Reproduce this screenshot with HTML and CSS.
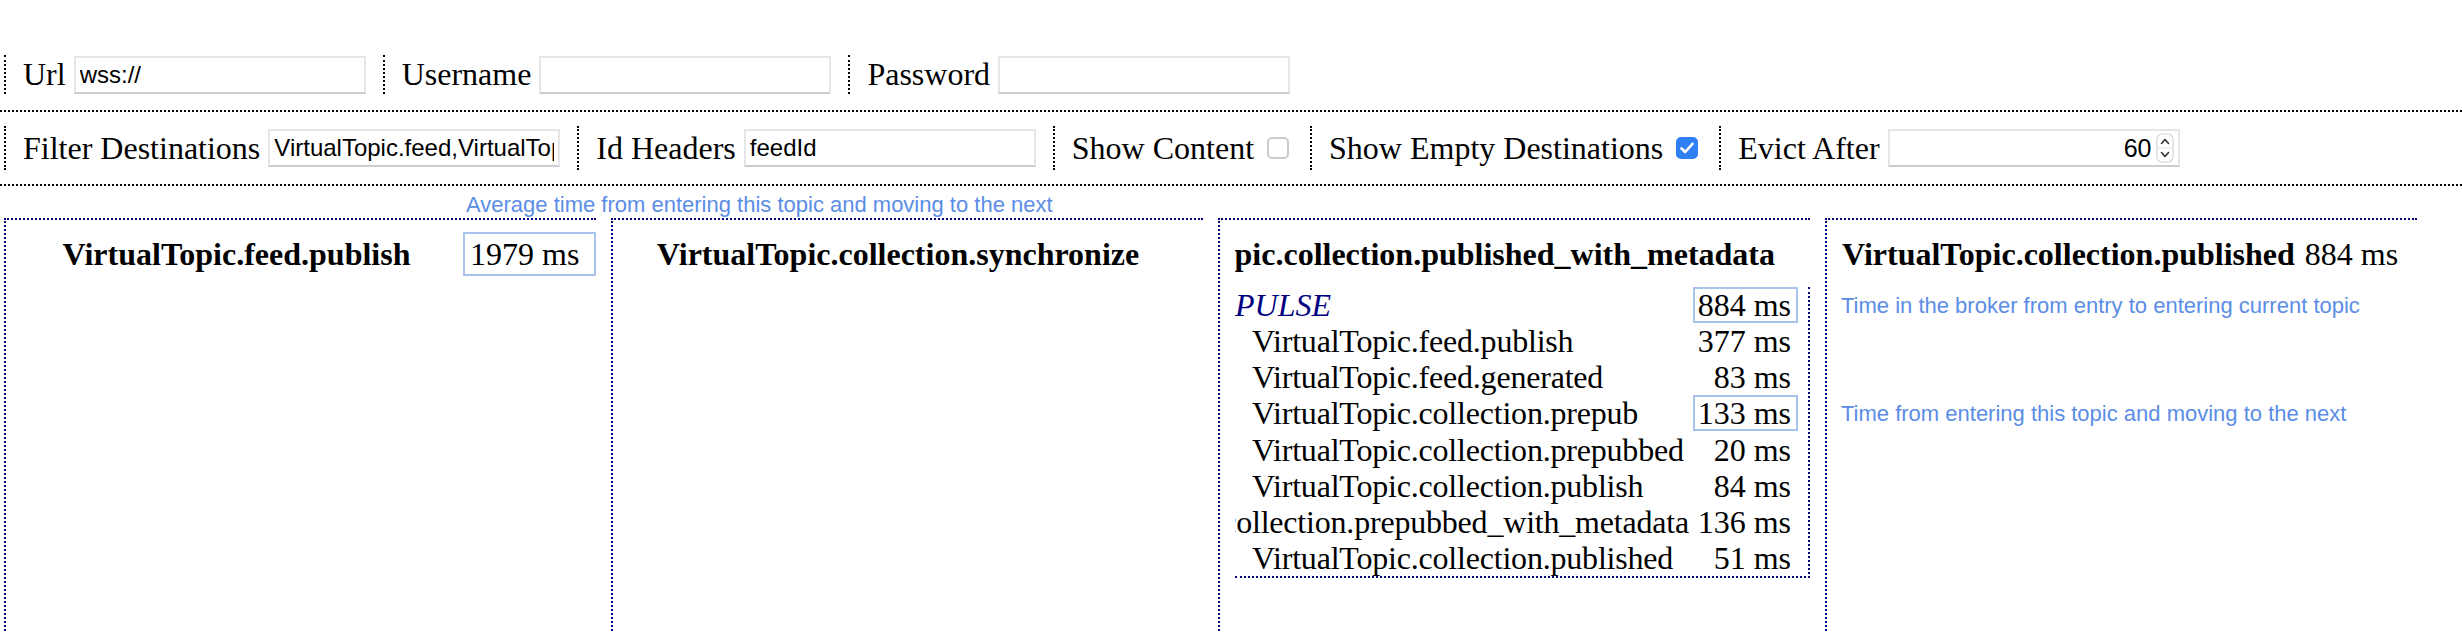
FILE: index.html
```html
<!DOCTYPE html>
<html>
<head>
<meta charset="utf-8">
<title>Broker destinations</title>
<link rel="stylesheet" href="styles.css">
</head>
<body>
<div class="bar bar-conn">
  <label class="field"><span class="lbl">Url</span><input class="txt" type="text" value="wss://"></label>
  <label class="field"><span class="lbl">Username</span><input class="txt" type="text" value=""></label>
  <label class="field"><span class="lbl">Password</span><input class="txt" type="password" value=""></label>
</div>
<div class="bar bar-opts">
  <label class="field"><span class="lbl">Filter Destinations</span><input class="txt" type="text" value="VirtualTopic.feed,VirtualTopic.collection"></label>
  <label class="field"><span class="lbl">Id Headers</span><input class="txt" type="text" value="feedId"></label>
  <label class="field"><span class="lbl">Show Content</span><span class="check"></span></label>
  <label class="field"><span class="lbl">Show Empty Destinations</span><span class="check on"><svg width="16" height="14" viewBox="0 0 16 14"><path d="M2.5 7.5 L6.2 11 L13.5 2.8" fill="none" stroke="#fff" stroke-width="2.6" stroke-linecap="round" stroke-linejoin="round"/></svg></span></label>
  <label class="field"><span class="lbl">Evict After</span><span class="num"><input class="num-in" type="text" value="60"><span class="spin"><svg width="18" height="30" viewBox="0 0 18 30"><rect x="1" y="1" width="16" height="28" rx="5" fill="#fff" stroke="#d6d6d6" stroke-width="1.2"/><line x1="2" y1="15" x2="16" y2="15" stroke="#e2e2e2" stroke-width="1"/><path d="M5.5 10.5 L9 6.5 L12.5 10.5" fill="none" stroke="#333" stroke-width="1.6" stroke-linecap="round" stroke-linejoin="round"/><path d="M5.5 19.5 L9 23.5 L12.5 19.5" fill="none" stroke="#333" stroke-width="1.6" stroke-linecap="round" stroke-linejoin="round"/></svg></span></span></label>
</div>
<div class="board">
  <section class="col">
    <div class="col-head">
      <h3 class="topic topic-lead">VirtualTopic.feed.publish</h3>
      <span class="lead-box">1979 ms<span class="tip tip-above">Average time from entering this topic and moving to the next</span></span>
    </div>
  </section>
  <section class="col">
    <div class="col-head">
      <h3 class="topic">VirtualTopic.collection.synchronize</h3>
    </div>
  </section>
  <section class="col">
    <div class="col-head">
      <h3 class="topic">VirtualTopic.collection.published_with_metadata</h3>
    </div>
    <div class="trail">
      <div class="row pulse"><span class="name">PULSE</span><span class="val boxed">884 ms<span class="tip tip-right">Time in the broker from entry to entering current topic</span></span></div>
      <div class="row"><span class="name">VirtualTopic.feed.publish</span><span class="val">377 ms</span></div>
      <div class="row"><span class="name">VirtualTopic.feed.generated</span><span class="val">83 ms</span></div>
      <div class="row"><span class="name">VirtualTopic.collection.prepub</span><span class="val boxed">133 ms<span class="tip tip-right">Time from entering this topic and moving to the next</span></span></div>
      <div class="row"><span class="name">VirtualTopic.collection.prepubbed</span><span class="val">20 ms</span></div>
      <div class="row"><span class="name">VirtualTopic.collection.publish</span><span class="val">84 ms</span></div>
      <div class="row"><span class="name">VirtualTopic.collection.prepubbed_with_metadata</span><span class="val">136 ms</span></div>
      <div class="row"><span class="name">VirtualTopic.collection.published</span><span class="val">51 ms</span></div>
    </div>
  </section>
  <section class="col">
    <div class="col-head col-head-left">
      <h3 class="topic topic-inline">VirtualTopic.collection.published</h3>
      <span class="head-ms">884 ms</span>
    </div>
  </section>
</div>
</body>
</html>
```

FILE: styles.css
```css
html, body {
  margin: 0;
  padding: 0;
  background: #fff;
}
body {
  width: 2462px;
  height: 632px;
  overflow: hidden;
  font-family: "Liberation Serif", "Times New Roman", serif;
  font-size: 32px;
  color: #000;
}

/* top bars */
.bar {
  display: flex;
  align-items: center;
  padding-left: 4px;
  border-bottom: 2px dotted #000;
}
.bar-conn {
  padding-top: 55px;
  padding-bottom: 16px;
}
.bar-opts {
  padding-top: 14px;
  padding-bottom: 14px;
}
.field {
  display: flex;
  align-items: center;
  gap: 8px;
  height: 39px;
  padding: 0 17px;
  border-left: 2px dotted #000;
}
.bar-opts .field {
  height: 44px;
}
.lbl {
  white-space: nowrap;
}
.txt {
  width: 292px;
  height: 38px;
  box-sizing: border-box;
  margin: 0;
  padding: 0 4px;
  border: 2px solid #e6e6e6;
  border-bottom-color: #cdcdcd;
  border-radius: 0;
  outline: none;
  background: #fff;
  color: #000;
  font-family: "Liberation Sans", Arial, sans-serif;
  font-size: 24px;
}
.check {
  width: 22px;
  height: 22px;
  box-sizing: border-box;
  margin: 0 4px 0 5px;
  border: 2px solid #cbcbcb;
  border-radius: 5px;
  background: #fff;
}
.check.on {
  display: flex;
  align-items: center;
  justify-content: center;
  background: #2f7ff5;
  border-color: #2f7ff5;
}
.num {
  display: flex;
  align-items: center;
  width: 292px;
  height: 38px;
  box-sizing: border-box;
  padding: 0 4px 0 6px;
  border: 2px solid #e6e6e6;
  border-bottom-color: #cdcdcd;
  background: #fff;
}
.num-in {
  flex: 1;
  min-width: 0;
  margin: 0;
  padding: 0 4px 0 0;
  border: 0;
  outline: none;
  background: transparent;
  text-align: right;
  color: #000;
  font-family: "Liberation Sans", Arial, sans-serif;
  font-size: 25px;
}
.spin {
  display: flex;
}

/* destination board */
.board {
  display: flex;
  gap: 15px;
  padding-left: 4px;
  margin-top: 32px;
}
.col {
  flex: none;
  width: 592px;
  min-height: 440px;
  box-sizing: border-box;
  padding-left: 15px;
  border-top: 2px dotted #000080;
  border-left: 2px dotted #000080;
}
.col-head {
  display: flex;
  align-items: center;
  height: 44px;
  margin-top: 12px;
}
.topic {
  flex: 1;
  min-width: 0;
  margin: 0 35px 0 0;
  font-size: 32px;
  font-weight: bold;
  line-height: 37px;
  white-space: nowrap;
  overflow: hidden;
  direction: rtl;
  text-align: center;
}
.topic-lead {
  margin-right: 11px;
}
.col-head-left .topic-inline {
  flex: none;
  margin-right: 0;
  direction: ltr;
  text-align: left;
}
.head-ms {
  margin-left: 10px;
  white-space: nowrap;
}
.lead-box {
  position: relative;
  flex: none;
  width: 133px;
  height: 44px;
  box-sizing: border-box;
  padding-left: 5px;
  border: 2px solid #a8c3ee;
  line-height: 40px;
  white-space: nowrap;
}

/* pulse trail table */
.trail {
  margin-top: 11px;
  border-right: 2px dotted #000080;
  border-bottom: 2px dotted #000080;
}
.row {
  display: flex;
  align-items: center;
  height: 36.15px;
}
.name {
  flex: 1;
  min-width: 0;
  margin-right: 4px;
  padding-left: 17px;
  white-space: nowrap;
  overflow: hidden;
  direction: rtl;
  text-align: left;
  letter-spacing: -0.2px;
  line-height: 36px;
}
.pulse .name {
  padding-left: 0;
  font-style: italic;
  color: #000080;
  letter-spacing: 0;
}
.val {
  position: relative;
  flex: none;
  width: 105px;
  height: 36px;
  box-sizing: border-box;
  margin-right: 10px;
  padding-right: 5px;
  border: 2px solid transparent;
  line-height: 32px;
  text-align: right;
  white-space: nowrap;
}
.val.boxed {
  border-color: #a8c3ee;
}

/* annotations */
.tip {
  position: absolute;
  z-index: 2;
  white-space: nowrap;
  font-family: "Liberation Sans", Arial, sans-serif;
  font-size: 22px;
  line-height: 25px;
  font-style: normal;
  font-weight: normal;
  color: #5b8de6;
  text-align: left;
  direction: ltr;
}
.tip-above {
  left: 1px;
  bottom: 100%;
  margin-bottom: 17px;
}
.tip-right {
  left: calc(100% + 45px);
  top: 50%;
  transform: translateY(-50%);
}
```
